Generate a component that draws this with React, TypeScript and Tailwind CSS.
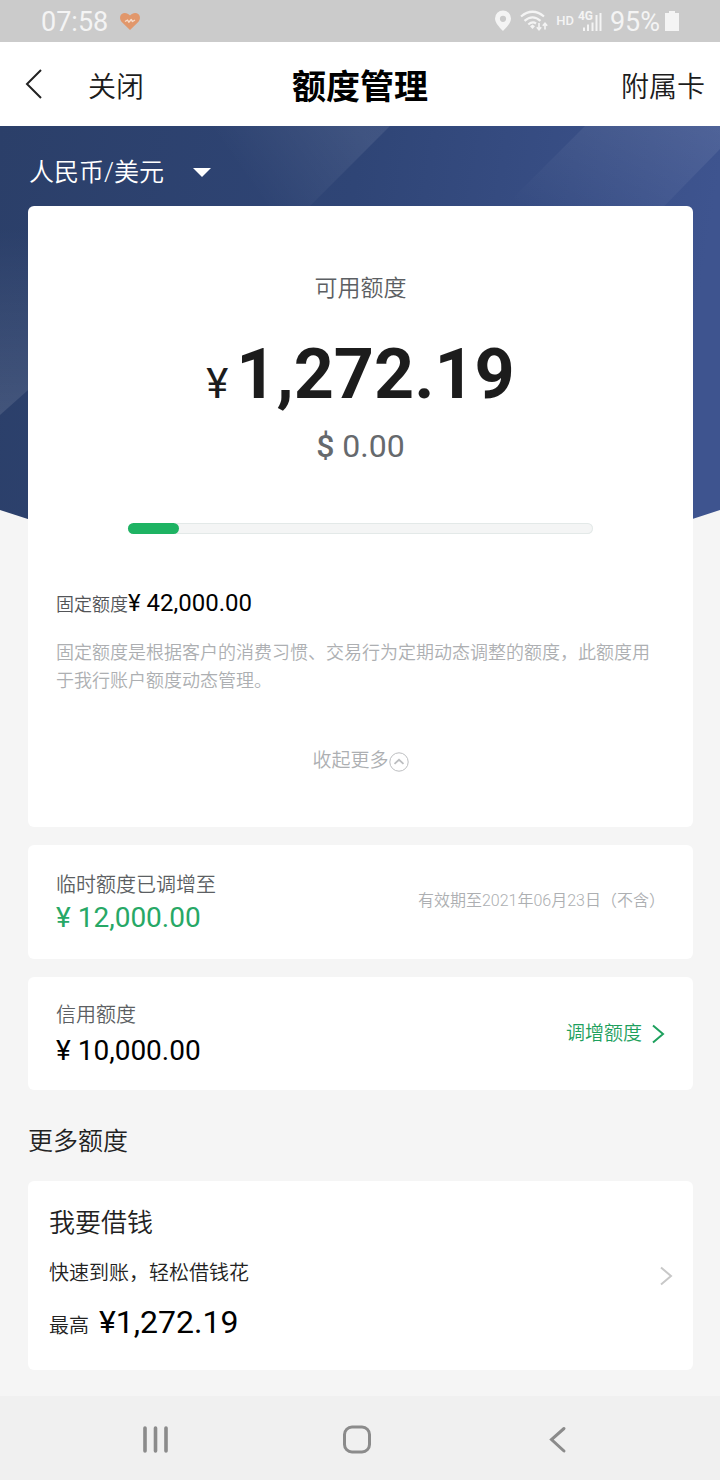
import React from "react";

function StatusBar() {
  return (
    <div className="flex h-[42px] items-center justify-between bg-[#cbcbcb] pr-10 pl-[41px] text-[27px] leading-10 text-[#f4f4f4]">
      <div className="flex items-center gap-3">
        <span className="pt-0.5">07:58</span>
        <svg className="h-[17px] w-5" viewBox="0 0 20 17" aria-hidden="true">
          <path
            d="M10 17 2 9.200C-.6 6.600-.4 3 1.500 1.300 3.800-.7 7.600-.3 10 2.600 12.400-.3 16.200-.7 18.500 1.300 20.400 3 20.600 6.600 18 9.200Z"
            fill="#e1976b"
          />
          <path d="M5 8.500 7.500 7l1.300 2.200 2.400-2.700 1.300 2 2.500-1.500" fill="none" stroke="#f6dccb" strokeWidth="1.400" strokeLinejoin="round" />
        </svg>
      </div>
      <div className="flex items-center">
        <svg className="mr-2 h-[22px] w-[18px]" viewBox="0 0 18 22" aria-hidden="true">
          <path fillRule="evenodd" d="M9 .5a8 8 0 0 1 8 8c0 4-4 8.500-8 12.500C5 17 1 12.500 1 8.500a8 8 0 0 1 8-8ZM9 5.700a3.100 3.100 0 1 0 0 6.200 3.100 3.100 0 0 0 0-6.200Z" fill="#f4f4f4" />
        </svg>
        <svg className="mr-2 h-[22px] w-7" viewBox="0 0 28 22" aria-hidden="true">
          <g fill="none" stroke="#f4f4f4" strokeWidth="2.200">
            <path d="M1 6.500Q12.500-3 24 6.500" />
            <path d="M4.500 10.800Q12.500 3.800 20.500 10.800" />
            <path d="M8.300 14.500Q12.500 11 16 13.500" />
          </g>
          <path d="M10 16.200 12.500 14.500 15 16.200 12.500 19Z" fill="#f4f4f4" />
          <path d="M19 13v6.500m-2.200-2.200L19 19.800l2.200-2.500M25 19.500V13.500m-2.200 2.200L25 13.200l2.200 2.500" fill="none" stroke="#f4f4f4" strokeWidth="1.600" />
        </svg>
        <span className="mr-1 text-[13px] font-medium">HD</span>
        <div className="relative mr-2 h-[22px] w-6">
          <svg className="h-[22px] w-6" viewBox="0 0 24 22" aria-hidden="true">
            <path d="M6 17.500V21M10 14.500V21M14.500 12.500V21M18.500 5V21M22.500 3V21" stroke="#f4f4f4" strokeWidth="2" />
          </svg>
          <span className="absolute top-0 left-0 text-[12px] leading-3 font-bold">4G</span>
        </div>
        <span className="mr-1 pt-0.5">95%</span>
        <svg className="h-5 w-4" viewBox="0 0 16 20" aria-hidden="true">
          <path d="M5 0h6v2h4V20H1V2h4Z" fill="#f4f4f4" />
        </svg>
      </div>
    </div>
  );
}

function Header() {
  return (
    <header className="grid h-[84px] grid-cols-[1fr_auto_1fr] items-center bg-white px-[15px] text-[28px] text-[#1c1c1c]">
      <div className="flex items-center gap-[34px]">
        <button type="button" aria-label="返回" className="px-2">
          <svg className="h-8 w-6" viewBox="0 0 24 32" aria-hidden="true">
            <path d="M18 2 4 16l14 14" fill="none" stroke="#222" strokeWidth="2" />
          </svg>
        </button>
        <button type="button" className="-ml-px pt-[7px] font-[350]">关闭</button>
      </div>
      <h1 className="pt-[7px] text-[34px] font-bold text-black">额度管理</h1>
      <button type="button" className="justify-self-end pt-[7px] font-[350]">附属卡</button>
    </header>
  );
}

function Backdrop() {
  return (
    <svg className="absolute inset-x-0 top-0 h-[450px] w-full" viewBox="0 0 720 450" preserveAspectRatio="none" aria-hidden="true">
      <defs>
        <linearGradient id="base" x1="0" y1="0" x2="1" y2="0.100">
          <stop offset="0" stopColor="#2b3f69" />
          <stop offset="0.500" stopColor="#2f4576" />
          <stop offset="1" stopColor="#3e548f" />
        </linearGradient>
        <linearGradient id="left" x1="0" y1="0" x2="0" y2="1">
          <stop offset="0" stopColor="#fff" stopOpacity="0" />
          <stop offset="1" stopColor="#fff" stopOpacity="0.110" />
        </linearGradient>
        <linearGradient id="middle" gradientUnits="userSpaceOnUse" x1="250" y1="60" x2="350" y2="-10">
          <stop offset="0" stopColor="#fff" stopOpacity="0" />
          <stop offset="1" stopColor="#fff" stopOpacity="0.080" />
        </linearGradient>
        <linearGradient id="right" x1="0" y1="1" x2="1" y2="0">
          <stop offset="0.200" stopColor="#fff" stopOpacity="0" />
          <stop offset="1" stopColor="#fff" stopOpacity="0.090" />
        </linearGradient>
      </defs>
      <path d="M0 0H720V384Q540 445 360 445T0 384Z" fill="url(#base)" />
      <path d="M0 100H100V200L0 289Z" fill="url(#left)" />
      <path d="M120 0H390L300 90H120Z" fill="url(#middle)" />
      <path d="M585 0H720V23L640 105H480Z" fill="url(#right)" />
    </svg>
  );
}

function Chevron({ className }: { className: string }) {
  return (
    <svg className={className} viewBox="0 0 14 20" aria-hidden="true">
      <path d="M2 1.500 12 10 2 18.500" fill="none" stroke="currentColor" strokeWidth="2" />
    </svg>
  );
}

function LimitCard() {
  return (
    <section className="rounded-md bg-white px-7 pt-[67px] pb-[52px]">
      <div className="flex flex-col items-center">
        <h2 className="text-[23px] leading-8 font-[350] text-[#5c5f63]">可用额度</h2>
        <p className="mt-[29px] flex items-baseline gap-2 text-[#1c1c1c]">
          <span className="text-[42px] leading-none">¥</span>
          <span className="text-[70px] leading-[80px] font-bold">1,272.19</span>
        </p>
        <p className="mt-3 text-[32px] leading-10 text-[#66696d]">
          <span className="font-medium">$</span> 0.00
        </p>
      </div>
      <div
        role="progressbar"
        aria-label="可用额度"
        aria-valuenow={11}
        aria-valuemin={0}
        aria-valuemax={100}
        className="mx-[72px] mt-[57px] h-[11px] rounded-full bg-[#f4f5f5] inset-ring inset-ring-[#e3e9e8]"
      >
        <div className="h-full w-[11%] rounded-full bg-[#1eb363]" />
      </div>
      <p className="mt-[53px] flex items-baseline">
        <span className="text-[18px] leading-none font-[350] text-[#535558]">固定额度</span>
        <span className="text-[24px] leading-8 text-black">¥ 42,000.00</span>
      </p>
      <p className="mt-5 text-[18px] leading-7 font-[350] text-[#adafb2]">
        固定额度是根据客户的消费习惯、交易行为定期动态调整的额度，此额度用于我行账户额度动态管理。
      </p>
      <button type="button" className="mx-auto mt-[52px] flex items-center text-[19px] leading-7 font-[350] text-[#adafb2]">
        收起更多
        <svg className="mt-0.5 h-5 w-5" viewBox="0 0 20 20" fill="none" stroke="#bcbec0" aria-hidden="true">
          <circle cx="10" cy="10" r="9.200" strokeWidth="1" />
          <path d="M5.500 11.800 10 7.800l4.500 4" strokeWidth="1.800" />
        </svg>
      </button>
    </section>
  );
}

export default function App() {
  return (
    <div className="flex min-h-screen flex-col bg-[#f5f5f5] font-[Roboto,'Noto_Sans_CJK_SC',sans-serif]">
      <StatusBar />
      <Header />
      <main className="relative flex-1 pr-[27px] pb-[26px] pl-7">
        <Backdrop />
        <div className="relative">
          <div className="flex h-20 items-center pt-[14px]">
            <div className="relative text-[25px] text-white">
              <select aria-label="币种" className="h-10 appearance-none bg-transparent pr-[47px] pl-px leading-10 font-[350]">
                <option>人民币/美元</option>
              </select>
              <svg className="pointer-events-none absolute top-[15px] right-0 h-[9px] w-[18px]" viewBox="0 0 18 9" aria-hidden="true">
                <path d="M0 0H18L9 9Z" fill="#fff" />
              </svg>
            </div>
          </div>
          <LimitCard />
          <section className="mt-[18px] flex items-center justify-between rounded-md bg-white px-7 pt-[26px] pb-[22px]">
            <div>
              <h2 className="text-[20px] leading-7 font-[350] text-[#5c5f63]">临时额度已调增至</h2>
              <p className="text-[28px] leading-[38px] text-[#27a866]">¥ 12,000.00</p>
            </div>
            <p className="pb-1.5 text-[16px] leading-6 font-[350] text-[#adafb2]">有效期至2021年06月23日（不含）</p>
          </section>
          <section className="mt-[18px] flex items-center justify-between rounded-md bg-white px-7 pt-6 pb-5">
            <div>
              <h2 className="text-[20px] leading-7 font-[350] text-[#5c5f63]">信用额度</h2>
              <p className="mt-[3px] text-[28px] leading-[38px] text-black">¥ 10,000.00</p>
            </div>
            <a href="#raise" className="flex items-center gap-[9px] pb-1 text-[19px] leading-7 font-[350] text-[#1da05d]">
              调增额度
              <Chevron className="h-5 w-[14px]" />
            </a>
          </section>
          <h2 className="mt-[34px] text-[25px] leading-9 font-[350] text-[#222]">更多额度</h2>
          <a href="#loan" className="mt-[21px] flex items-center justify-between rounded-md bg-white pt-6 pr-5 pb-7 pl-[21px] text-[#222]">
            <div>
              <h3 className="text-[26px] leading-9 font-[350]">我要借钱</h3>
              <p className="mt-[18px] text-[20px] leading-7 font-[350]">快速到账，轻松借钱花</p>
              <p className="mt-[15px] flex items-baseline gap-[10px]">
                <span className="text-[20px] leading-none font-[350]">最高</span>
                <span className="text-[32px] leading-10 text-black">¥1,272.19</span>
              </p>
            </div>
            <Chevron className="mt-1 h-5 w-[14px] text-[#c8c8c8]" />
          </a>
        </div>
      </main>
      <nav className="grid h-[84px] grid-cols-[155fr_202fr_200fr_163fr] items-center bg-[#f0f0f0] text-[#8b8b8b]">
        <button type="button" aria-label="最近任务" className="-mr-4 justify-self-end">
          <svg className="h-8 w-8" viewBox="0 0 32 32" fill="none" stroke="currentColor" aria-hidden="true">
            <path d="M6 6v23M16.500 6v23M27 6v23" strokeWidth="3.600" strokeLinecap="round" />
          </svg>
        </button>
        <button type="button" aria-label="主屏幕" className="-mr-4 justify-self-end">
          <svg className="h-8 w-8" viewBox="0 0 32 32" fill="none" stroke="currentColor" aria-hidden="true">
            <rect x="3.500" y="5" width="25" height="25" rx="7.500" strokeWidth="3" />
          </svg>
        </button>
        <button type="button" aria-label="返回上一页" className="-mr-4 justify-self-end">
          <svg className="h-8 w-8" viewBox="0 0 32 32" fill="none" stroke="currentColor" aria-hidden="true">
            <path d="M23 6.500 10.500 17.500 23 29" strokeWidth="3" strokeLinecap="round" />
          </svg>
        </button>
      </nav>
    </div>
  );
}
